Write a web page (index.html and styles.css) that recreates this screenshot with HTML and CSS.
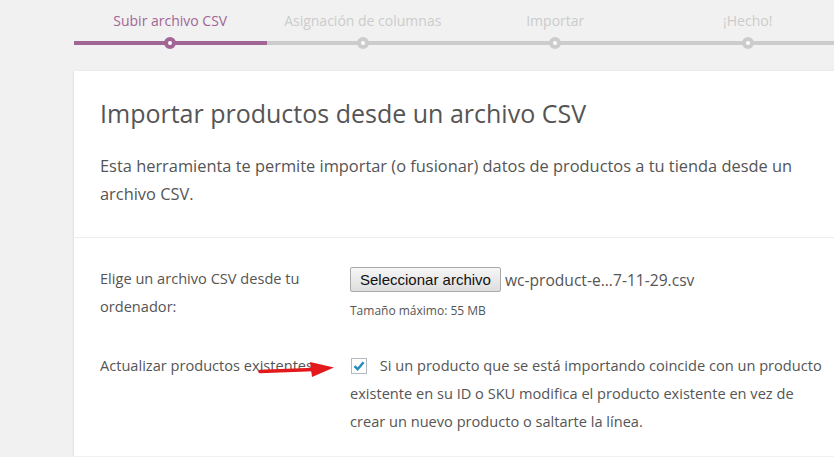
FILE: index.html
```html
<!DOCTYPE html>
<html lang="es">
<head>
  <meta charset="UTF-8">
  <meta name="viewport" content="width=device-width, initial-scale=1.0">
  <title>Importar productos</title>
  <link rel="stylesheet" href="styles.css">
</head>
<body>
  <div class="wrap">
    <ol class="steps">
      <li class="done active"><span>Subir archivo CSV</span></li>
      <li><span>Asignación de columnas</span></li>
      <li><span>Importar</span></li>
      <li><span>¡Hecho!</span></li>
    </ol>

    <div class="card">
      <header class="card-head">
        <h2>Importar productos desde un archivo CSV</h2>
        <p>Esta herramienta te permite importar (o fusionar) datos de productos a tu tienda desde un archivo CSV.</p>
      </header>

      <section class="form-rows">
        <div class="row">
          <label class="row-label">Elige un archivo CSV desde tu ordenador:</label>
          <div class="row-field">
            <div class="file-line">
              <button class="file-btn">Seleccionar archivo</button>
              <span class="file-name">wc-product-e...7-11-29.csv</span>
            </div>
            <small class="hint">Tamaño máximo: 55 MB</small>
          </div>
        </div>

        <div class="row">
          <label class="row-label">
            Actualizar productos existentes
            <svg class="arrow" width="80" height="20" viewBox="0 0 80 20">
              <path d="M2 12.5 L56 10.5" stroke="#e3191b" stroke-width="3.5" stroke-linecap="round"/>
              <path d="M52 3 L76 8.5 L54 18 Z" fill="#e3191b"/>
            </svg>
          </label>
          <div class="row-field check-field">
            <span class="checkbox">
              <svg width="14" height="14" viewBox="0 0 14 14">
                <path d="M2.5 7.2 L5.6 10.2 L11.6 3.2" fill="none" stroke="#1e8cbe" stroke-width="2.4"/>
              </svg>
            </span>
            <span class="check-text">Si un producto que se está importando coincide con un producto existente en su ID o SKU modifica el producto existente en vez de crear un nuevo producto o saltarte la línea.</span>
          </div>
        </div>
      </section>
    </div>
  </div>
</body>
</html>
```

FILE: styles.css
```css
html, body {
  margin: 0;
  padding: 0;
  overflow: hidden;
  background-color: #f1f1f1;
  font-family: 'Open Sans', 'Noto Sans', sans-serif;
  color: #555;
}

.wrap {
  margin-left: 74px;
  width: 770px;
}

/* progress steps */
.steps {
  display: flex;
  list-style: none;
  margin: 0;
  padding: 0;
}

.steps li {
  flex: 1;
  position: relative;
  text-align: center;
  font-size: 14px;
  color: #ccc;
  padding-top: 11px;
  padding-bottom: 11px;
  border-bottom: 4px solid #ccc;
}

.steps li::after {
  content: '';
  position: absolute;
  left: 50%;
  bottom: -8px;
  width: 4px;
  height: 4px;
  margin-left: -6px;
  background: #fff;
  border: 4px solid #ccc;
  border-radius: 50%;
}

.steps li.done {
  border-bottom-color: #a16696;
}

.steps li.done::after {
  border-color: #a16696;
}

.steps li.active {
  color: #a16696;
}

/* card */
.card {
  margin-top: 26px;
  background: #fff;
  box-shadow: 0 1px 3px rgba(0, 0, 0, 0.13);
  height: 385px;
  overflow: hidden;
}

.card-head {
  padding: 25px 26px 29px;
  border-bottom: 1px solid #eee;
}

.card-head h2 {
  margin: 0;
  font-size: 25px;
  font-weight: normal;
  color: #555;
}

.card-head p {
  margin: 22px 0 0;
  font-size: 16.4px;
  line-height: 28px;
  color: #555;
}

.form-rows {
  padding: 26px 16px 0 26px;
}

.row {
  display: flex;
  margin-bottom: 31px;
}

.row-label {
  position: relative;
  width: 250px;
  flex-shrink: 0;
  padding-right: 30px;
  box-sizing: border-box;
  font-size: 14.6px;
  line-height: 28px;
}

.arrow {
  position: absolute;
  left: 158px;
  top: 8px;
}

.row-field {
  flex: 1;
}

.file-line {
  display: flex;
  align-items: center;
  gap: 4px;
  padding-top: 3px;
}

.file-btn {
  font-family: 'Liberation Sans', Arial, sans-serif;
  font-size: 15px;
  color: #111;
  height: 25px;
  padding: 0 9px;
  border: 1px solid #a9a9a9;
  border-radius: 2px;
  background: linear-gradient(#f6f6f6, #dedede);
}

.file-name {
  font-size: 15.6px;
}

.hint {
  display: block;
  margin-top: 10px;
  font-size: 12px;
  color: #555;
}

.check-field {
  display: block;
  font-size: 14.6px;
  line-height: 28px;
}

.checkbox {
  display: inline-block;
  vertical-align: -3px;
  width: 14px;
  height: 14px;
  border: 1px solid #b4b9be;
  margin-right: 9px;
  margin-left: 1px;
}

.checkbox svg {
  display: block;
}
```
